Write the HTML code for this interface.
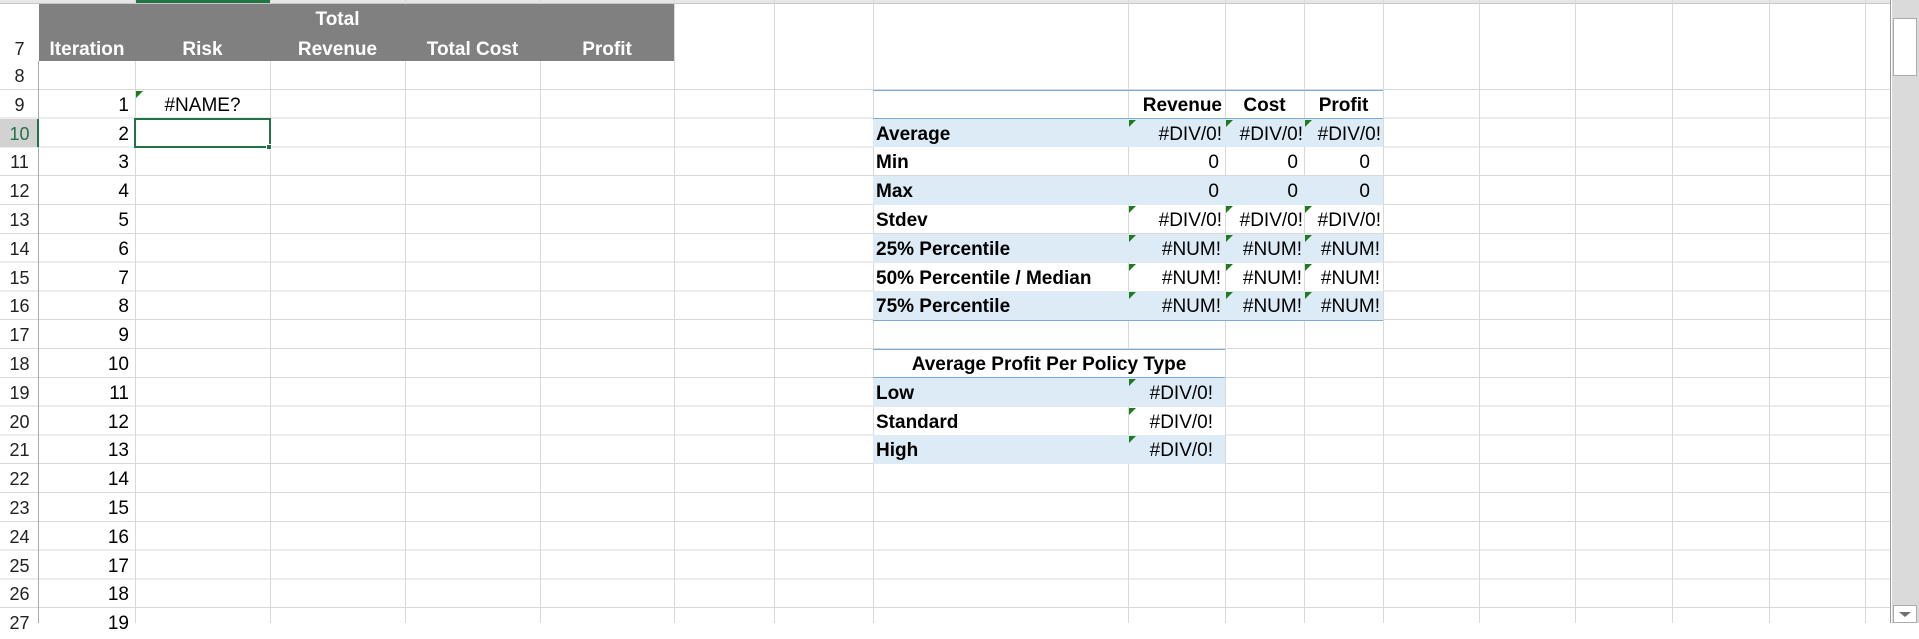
<!DOCTYPE html>
<html><head><meta charset="utf-8"><style>
*{margin:0;padding:0;box-sizing:border-box}
html,body{width:1919px;height:623px;overflow:hidden;background:#fff;font-family:"Liberation Sans",Arial,sans-serif;font-size:19px;color:#000}
.a{position:absolute}
.grid{position:absolute;left:39px;top:61px;width:1852px;height:562px;background:repeating-linear-gradient(to bottom,transparent 0,transparent 27.8px,#d9d9d9 27.8px,#d9d9d9 28.8px)}
.rh{position:absolute;left:0;top:61px;width:39px;height:562px;background:repeating-linear-gradient(to bottom,transparent 0,transparent 27.8px,#d9d9d9 27.8px,#d9d9d9 28.8px);border-right:1px solid #ababab}
.v{position:absolute;top:0;width:1px;height:623px;background:#d9d9d9}
.rn{position:absolute;left:0;width:39px;height:28.8px;line-height:31px;text-align:center;font-size:18px;color:#222}
.c{position:absolute;height:28.8px;line-height:31px;white-space:nowrap}
.r{text-align:right;padding-right:6px}
.b{font-weight:bold}
.band{position:absolute;background:#ddebf7}
.bl{position:absolute;height:1px;background:#7eaadb}
.t{position:absolute;width:0;height:0;border-top:7px solid #1e7b1e;border-right:7px solid transparent}
</style></head><body>
<div class="a" style="left:0;top:0;width:1891px;height:4px;background:#e6e6e6;border-bottom:1px solid #c8c8c8"></div>
<div class="a" style="left:135px;top:0;width:135px;height:3px;background:#217346"></div>
<div class="grid"></div>
<div class="rh"></div>
<div class="v" style="left:135px"></div><div class="v" style="left:270px"></div><div class="v" style="left:405px"></div><div class="v" style="left:540px"></div><div class="v" style="left:674px"></div><div class="v" style="left:774px"></div><div class="v" style="left:873px"></div><div class="v" style="left:1128px"></div><div class="v" style="left:1225px"></div><div class="v" style="left:1304px"></div><div class="v" style="left:1383px"></div><div class="v" style="left:1479px"></div><div class="v" style="left:1575px"></div><div class="v" style="left:1672px"></div><div class="v" style="left:1769px"></div><div class="v" style="left:1865px"></div>
<div class="a" style="left:1890px;top:0;width:1px;height:623px;background:#9a9a9a"></div>
<div class="a" style="left:39px;top:4px;width:635px;height:57px;background:#808080"></div>
<div class="a" style="left:39px;top:4px;width:636px;height:57px;border-right:1px solid #d9d9d9"></div>
<div class="rn" style="top:34px">7</div>
<div class="c b" style="left:39px;top:34px;width:96px;text-align:center;color:#fff">Iteration</div>
<div class="c b" style="left:135px;top:34px;width:135px;text-align:center;color:#fff">Risk</div>
<div class="c b" style="left:270px;top:4px;width:135px;text-align:center;color:#fff">Total</div>
<div class="c b" style="left:270px;top:34px;width:135px;text-align:center;color:#fff">Revenue</div>
<div class="c b" style="left:405px;top:34px;width:135px;text-align:center;color:#fff">Total Cost</div>
<div class="c b" style="left:540px;top:34px;width:134px;text-align:center;color:#fff">Profit</div>
<div class="rn" style="top:61px">8</div>
<div class="rn" style="top:89.8px">9</div>
<div class="a" style="left:0;top:118.6px;width:39px;height:28.8px;background:#d2d2d2;border-right:2px solid #217346"></div>
<div class="rn" style="top:118.6px;color:#217346">10</div>
<div class="rn" style="top:147.4px">11</div><div class="rn" style="top:176.2px">12</div><div class="rn" style="top:205px">13</div><div class="rn" style="top:233.8px">14</div><div class="rn" style="top:262.6px">15</div><div class="rn" style="top:291.4px">16</div><div class="rn" style="top:320.2px">17</div><div class="rn" style="top:349px">18</div><div class="rn" style="top:377.8px">19</div><div class="rn" style="top:406.6px">20</div><div class="rn" style="top:435.4px">21</div><div class="rn" style="top:464.2px">22</div><div class="rn" style="top:493px">23</div><div class="rn" style="top:521.8px">24</div><div class="rn" style="top:550.6px">25</div><div class="rn" style="top:579.4px">26</div><div class="rn" style="top:608.2px">27</div>
<div class="c r" style="left:39px;width:96px;top:89.8px">1</div><div class="c r" style="left:39px;width:96px;top:118.6px">2</div><div class="c r" style="left:39px;width:96px;top:147.4px">3</div><div class="c r" style="left:39px;width:96px;top:176.2px">4</div><div class="c r" style="left:39px;width:96px;top:205px">5</div><div class="c r" style="left:39px;width:96px;top:233.8px">6</div><div class="c r" style="left:39px;width:96px;top:262.6px">7</div><div class="c r" style="left:39px;width:96px;top:291.4px">8</div><div class="c r" style="left:39px;width:96px;top:320.2px">9</div><div class="c r" style="left:39px;width:96px;top:349px">10</div><div class="c r" style="left:39px;width:96px;top:377.8px">11</div><div class="c r" style="left:39px;width:96px;top:406.6px">12</div><div class="c r" style="left:39px;width:96px;top:435.4px">13</div><div class="c r" style="left:39px;width:96px;top:464.2px">14</div><div class="c r" style="left:39px;width:96px;top:493px">15</div><div class="c r" style="left:39px;width:96px;top:521.8px">16</div><div class="c r" style="left:39px;width:96px;top:550.6px">17</div><div class="c r" style="left:39px;width:96px;top:579.4px">18</div><div class="c r" style="left:39px;width:96px;top:608.2px">19</div>
<div class="t" style="left:136px;top:90.8px"></div>
<div class="c" style="left:135px;width:135px;top:89.8px;text-align:center">#NAME?</div>
<div class="a" style="left:134px;top:117.6px;width:137px;height:30.8px;border:2px solid #217346"></div>
<div class="a" style="left:266px;top:144.4px;width:6px;height:6px;background:#217346;border:1px solid #fff"></div>
<div class="a" style="left:874px;top:90.8px;width:509px;height:27.8px;background:#fff"></div>
<div class="band" style="left:873px;top:118.6px;width:510px;height:28.8px"></div>
<div class="a" style="left:874px;top:147.4px;width:509px;height:28px;background:#fff"></div>
<div class="band" style="left:873px;top:176.2px;width:510px;height:28.8px"></div>
<div class="a" style="left:874px;top:205px;width:509px;height:28px;background:#fff"></div>
<div class="band" style="left:873px;top:233.8px;width:510px;height:28.8px"></div>
<div class="a" style="left:874px;top:262.6px;width:509px;height:28px;background:#fff"></div>
<div class="band" style="left:873px;top:291.4px;width:510px;height:28.8px"></div>
<div class="v" style="left:1128px;top:90px;height:29px"></div><div class="v" style="left:1225px;top:90px;height:29px"></div><div class="v" style="left:1304px;top:90px;height:29px"></div>
<div class="v" style="left:1128px;top:147px;height:29px"></div><div class="v" style="left:1225px;top:147px;height:29px"></div><div class="v" style="left:1304px;top:147px;height:29px"></div>
<div class="v" style="left:1128px;top:205px;height:29px"></div><div class="v" style="left:1225px;top:205px;height:29px"></div><div class="v" style="left:1304px;top:205px;height:29px"></div>
<div class="v" style="left:1128px;top:262px;height:29px"></div><div class="v" style="left:1225px;top:262px;height:29px"></div><div class="v" style="left:1304px;top:262px;height:29px"></div>
<div class="bl" style="left:873px;top:89.8px;width:510px"></div>
<div class="bl" style="left:873px;top:118.1px;width:510px"></div>
<div class="bl" style="left:873px;top:319.7px;width:510px"></div>
<div class="c b r" style="left:1128px;width:97px;top:89.8px;padding-right:3px">Revenue</div>
<div class="c b" style="left:1225px;width:79px;top:89.8px;text-align:center">Cost</div>
<div class="c b" style="left:1304px;width:79px;top:89.8px;text-align:center">Profit</div>
<div class="c b" style="left:876px;top:118.6px">Average</div>
<div class="c b" style="left:876px;top:147.4px">Min</div>
<div class="c b" style="left:876px;top:176.2px">Max</div>
<div class="c b" style="left:876px;top:205px">Stdev</div>
<div class="c b" style="left:876px;top:233.8px">25% Percentile</div>
<div class="c b" style="left:876px;top:262.6px">50% Percentile / Median</div>
<div class="c b" style="left:876px;top:291.4px">75% Percentile</div>
<div class="c r" style="left:1128px;width:97px;top:118.6px;padding-right:3px">#DIV/0!</div><div class="c r" style="left:1225px;width:79px;top:118.6px;padding-right:1px">#DIV/0!</div><div class="c r" style="left:1304px;width:79px;top:118.6px;padding-right:2px">#DIV/0!</div>
<div class="c r" style="left:1128px;width:97px;top:147.4px">0</div><div class="c r" style="left:1225px;width:79px;top:147.4px">0</div><div class="c r" style="left:1304px;width:79px;top:147.4px;padding-right:13px">0</div>
<div class="c r" style="left:1128px;width:97px;top:176.2px">0</div><div class="c r" style="left:1225px;width:79px;top:176.2px">0</div><div class="c r" style="left:1304px;width:79px;top:176.2px;padding-right:13px">0</div>
<div class="c r" style="left:1128px;width:97px;top:205px;padding-right:3px">#DIV/0!</div><div class="c r" style="left:1225px;width:79px;top:205px;padding-right:1px">#DIV/0!</div><div class="c r" style="left:1304px;width:79px;top:205px;padding-right:2px">#DIV/0!</div>
<div class="c r" style="left:1128px;width:97px;top:233.8px;padding-right:4px">#NUM!</div><div class="c r" style="left:1225px;width:79px;top:233.8px;padding-right:2px">#NUM!</div><div class="c r" style="left:1304px;width:79px;top:233.8px;padding-right:3px">#NUM!</div>
<div class="c r" style="left:1128px;width:97px;top:262.6px;padding-right:4px">#NUM!</div><div class="c r" style="left:1225px;width:79px;top:262.6px;padding-right:2px">#NUM!</div><div class="c r" style="left:1304px;width:79px;top:262.6px;padding-right:3px">#NUM!</div>
<div class="c r" style="left:1128px;width:97px;top:291.4px;padding-right:4px">#NUM!</div><div class="c r" style="left:1225px;width:79px;top:291.4px;padding-right:2px">#NUM!</div><div class="c r" style="left:1304px;width:79px;top:291.4px;padding-right:3px">#NUM!</div>
<div class="t" style="left:1129px;top:119.6px"></div><div class="t" style="left:1226px;top:119.6px"></div><div class="t" style="left:1305px;top:119.6px"></div>
<div class="t" style="left:1129px;top:206px"></div><div class="t" style="left:1226px;top:206px"></div><div class="t" style="left:1305px;top:206px"></div>
<div class="t" style="left:1129px;top:234.8px"></div><div class="t" style="left:1226px;top:234.8px"></div><div class="t" style="left:1305px;top:234.8px"></div>
<div class="t" style="left:1129px;top:263.6px"></div><div class="t" style="left:1226px;top:263.6px"></div><div class="t" style="left:1305px;top:263.6px"></div>
<div class="t" style="left:1129px;top:292.4px"></div><div class="t" style="left:1226px;top:292.4px"></div><div class="t" style="left:1305px;top:292.4px"></div>
<div class="a" style="left:874px;top:349.5px;width:351px;height:28px;background:#fff"></div>
<div class="band" style="left:873px;top:377.8px;width:352px;height:28.8px"></div>
<div class="a" style="left:874px;top:406.6px;width:351px;height:28px;background:#fff"></div>
<div class="v" style="left:1128px;top:406px;height:29px"></div>
<div class="band" style="left:873px;top:435.4px;width:352px;height:28.8px"></div>
<div class="bl" style="left:873px;top:349px;width:352px"></div>
<div class="bl" style="left:873px;top:377.3px;width:352px"></div>
<div class="c b" style="left:873px;width:352px;top:349px;text-align:center">Average Profit Per Policy Type</div>
<div class="c b" style="left:876px;top:377.8px">Low</div>
<div class="c b" style="left:876px;top:406.6px">Standard</div>
<div class="c b" style="left:876px;top:435.4px">High</div>
<div class="c r" style="left:1128px;width:97px;top:377.8px;padding-right:12px">#DIV/0!</div>
<div class="c r" style="left:1128px;width:97px;top:406.6px;padding-right:12px">#DIV/0!</div>
<div class="c r" style="left:1128px;width:97px;top:435.4px;padding-right:12px">#DIV/0!</div>
<div class="t" style="left:1129px;top:378.8px"></div><div class="t" style="left:1129px;top:407.6px"></div><div class="t" style="left:1129px;top:436.4px"></div>
<div class="a" style="left:1892px;top:0;width:27px;height:623px;background:#dadada"></div>
<div class="a" style="left:1893px;top:18px;width:24px;height:58px;background:#fff;border:1px solid #ababab"></div>
<div class="a" style="left:1893px;top:605px;width:24px;height:18px;background:#fff;border:1px solid #ababab"></div>
<div class="a" style="left:1899px;top:612px;width:0;height:0;border-left:6px solid transparent;border-right:6px solid transparent;border-top:5px solid #707070"></div>
</body></html>
